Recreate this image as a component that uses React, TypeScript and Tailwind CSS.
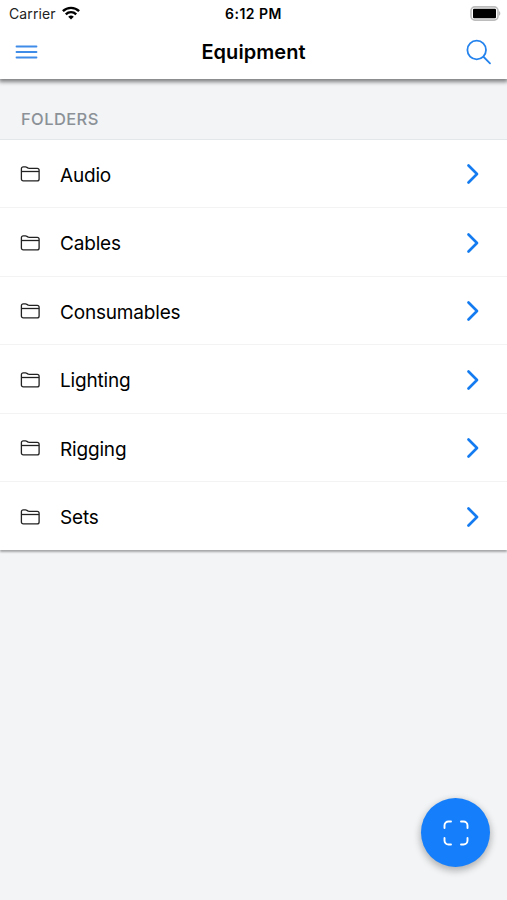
const FOLDERS = ['Audio', 'Cables', 'Consumables', 'Lighting', 'Rigging', 'Sets'];

function WifiIcon() {
  return (
    <svg width="18" height="14" viewBox="0 0 18 14" fill="none" stroke="#000" strokeWidth="2.4" className="-mt-[2px]">
      <path d="M0.9 5.2a11.6 11.6 0 0 1 16.2 0" />
      <path d="M3.8 8.3a7.4 7.4 0 0 1 10.4 0" />
      <path d="M9 13.6 6.2 10.8a4 4 0 0 1 5.6 0z" fill="#000" stroke="none" />
    </svg>
  );
}

function BatteryIcon() {
  return (
    <svg width="32" height="15" viewBox="0 0 32 15" fill="none">
      <rect x="1" y="0.9" width="27" height="13.2" rx="3.8" stroke="#bcbcbc" strokeWidth="1.6" />
      <rect x="3" y="2.7" width="23" height="9.6" rx="1" fill="#000" />
      <path d="M29.2 5.3c1.4.5 1.4 3.9 0 4.4z" fill="#a8a8a8" />
    </svg>
  );
}

function FolderIcon() {
  return (
    <svg width="20" height="16" viewBox="0 0 20 16" fill="none" stroke="#222" strokeWidth="1.3" strokeLinejoin="round">
      <path d="M1.4 12.9V2.8C1.4 1.6 2.1.9 3.3.9h2.2c.6 0 1 .1 1.5.5l.7.5c.5.3.9.4 1.5.4h8c1.2 0 1.9.7 1.9 1.9v8.7c0 1.3-.7 2-2 2H3.4c-1.3 0-2-.7-2-2z" />
      <path d="M1.4 5.5h17.7" />
    </svg>
  );
}

function Chevron() {
  return (
    <svg width="14" height="22" viewBox="0 0 14 22" fill="none" stroke="#147cf0" strokeWidth="2.7" strokeLinecap="round" strokeLinejoin="round">
      <path d="M2.5 2.5 11 11l-8.5 8.5" />
    </svg>
  );
}

export default function App() {
  return (
    <div className="relative flex h-[900px] w-[507px] flex-col overflow-hidden bg-[#f2f4f6] font-['Inter','Liberation_Sans',sans-serif] text-black">
      <header className="relative h-[79px] bg-white shadow-[0_2px_4px_1px_rgba(0,0,0,0.48)]">
        {/* Status bar */}
        <div className="grid h-[27px] grid-cols-[1fr_auto_1fr] items-center pl-[9px] pr-[5px]">
          <div className="flex items-center gap-[6px] text-[14px] tracking-[0.1px] text-[#222]">
            <span>Carrier</span>
            <WifiIcon />
          </div>
          <span className="-ml-[4px] text-center text-[14px] font-semibold tracking-[0.5px]">6:12 PM</span>
          <div className="flex justify-end">
            <BatteryIcon />
          </div>
        </div>

        {/* Title bar */}
        <div className="grid h-[52px] grid-cols-[1fr_auto_1fr] items-center px-[15px] pb-[2px]">
          <button aria-label="Menu" className="w-fit">
            <svg width="23" height="16" viewBox="0 0 23 16" stroke="#3f8ce8" strokeWidth="1.8" strokeLinecap="round">
              <path d="M1.5 2.5h20M1.5 8h20M1.5 13.5h20" />
            </svg>
          </button>
          <h1 className="text-[20px] font-semibold tracking-[0.05px]">Equipment</h1>
          <button aria-label="Search" className="w-fit justify-self-end">
            <svg width="26" height="26" viewBox="0 0 26 26" fill="none" stroke="#2583ed" strokeWidth="1.8" strokeLinecap="round">
              <circle cx="10.7" cy="11" r="9.3" />
              <path d="m17.7 18 6.3 6.3" />
            </svg>
          </button>
        </div>
      </header>

      <h2 className="flex h-[60px] items-end pb-[7px] pl-[21px] text-[16.5px] font-medium tracking-[0.4px] text-[#8b9197]">FOLDERS</h2>

      <ul className="border-t border-[#e4e7e9] bg-white shadow-[0_2px_2px_0_rgba(0,0,0,0.32)]">
        {FOLDERS.map((name) => (
          <li key={name} className="flex h-[68.4px] items-center border-b border-[#f3f3f3] pl-[20px] pr-[27px] pt-[1.5px] last:border-b-0">
            <FolderIcon />
            <span className="ml-[20px] flex-1 pt-[3.5px] text-[19px] tracking-[-0.18px]">{name}</span>
            <Chevron />
          </li>
        ))}
      </ul>

      {/* Scan button floats above the list */}
      <button
        aria-label="Scan"
        className="absolute bottom-[33px] right-[17px] flex size-[69px] items-center justify-center rounded-full bg-[#147efb] shadow-[0_3px_7px_1px_rgba(0,0,0,0.27)]"
      >
        <svg width="26" height="26" viewBox="0 0 26 26" fill="none" stroke="#fff" strokeWidth="1.9" strokeLinecap="round">
          <path d="M1.5 8V5.5a4 4 0 0 1 4-4H8M18 1.5h2.5a4 4 0 0 1 4 4V8M24.5 18v2.5a4 4 0 0 1-4 4H18M8 24.5H5.5a4 4 0 0 1-4-4V18" />
        </svg>
      </button>
    </div>
  );
}
